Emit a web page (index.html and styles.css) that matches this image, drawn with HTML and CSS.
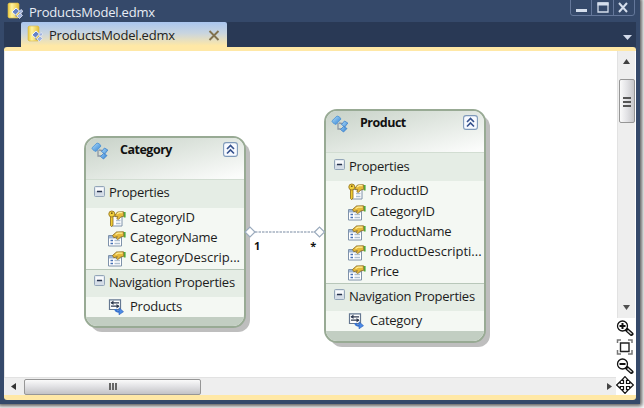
FILE: index.html
```html
<!DOCTYPE html>
<html lang="en">
<head>
<meta charset="utf-8">
<title>ProductsModel.edmx</title>
<link rel="stylesheet" href="styles.css">
</head>
<body>
<svg class="defs" width="0" height="0">
  <defs>
    <linearGradient id="gold" x1="0" x2="1"><stop offset="0" stop-color="#e9c93c"/><stop offset=".35" stop-color="#fff3a0"/><stop offset="1" stop-color="#e2bd38"/></linearGradient>
    <linearGradient id="blue" x1="0" y1="0" x2="1" y2="1"><stop offset="0" stop-color="#b5e2fb"/><stop offset="1" stop-color="#2c7cd2"/></linearGradient>
    <symbol id="file" viewBox="0 0 16 17">
      <path d="M1 2 2 1h9l1 1v13l-1 1H2l-1-1z" fill="url(#gold)" stroke="#d9bb4c" stroke-width=".6"/>
      <path d="M8.500 8v6l3 1M9 8l5 2" fill="none" stroke="#8490ad"/>
      <path d="M5 10 9 6l3.500 3L8.500 13z" fill="#6583c6" stroke="#f0f3fc" stroke-width="1"/>
      <path d="M10 14l3-3 2.500 2.500-3 3zM12 9.500 14 7.500l1.800 1.500L14 11.500z" fill="#9fb3de" stroke="#e4e9f7" stroke-width=".8"/>
    </symbol>
    <symbol id="entity" viewBox="0 0 18 18">
      <path d="M7 8v6h4M8 8l5 1" fill="none" stroke="#8d98a5" stroke-width="1.300"/>
      <path d="M.8 6 6 1q2.500 0 4 3L5 9.500Q2 9 .8 6z" fill="url(#blue)" stroke="#4a92d4" stroke-width=".8"/>
      <path d="m10.500 9.500 3-3.500 3.300 2-3 4zM9.500 14.500l3-3 3.500 2-3.500 3.500z" fill="url(#blue)" stroke="#3b80cc" stroke-width=".8"/>
    </symbol>
    <symbol id="prop" viewBox="0 0 18 16">
      <path d="M.5 4.500h13v10.500H.5z" fill="#fff" stroke="#7f92aa"/>
      <path d="M1 5h12v2.500H1z" fill="#9db5d2"/>
      <path d="M2.500 9.500H5M2.500 12.500H5" stroke="#4771b5" stroke-width="1.500"/>
      <path d="M6.500 9.500h5.500M6.500 12.500h5.500" stroke="#aebfd0" stroke-width="1.300"/>
      <path d="M15.800 1h1.800v5.500h-1.800z" fill="#4fae3b"/>
      <path d="m4.500 4.500 4-3.500 7-.2.300 4.500-3 .7-3 2.500-1.500-1 1-1.800-3.500 1z" fill="#e5b93a" stroke="#8d7028" stroke-width=".9"/>
      <path d="m7.500 3.500 2.500-1.300h4.500" fill="none" stroke="#ffee96" stroke-width="1.300"/>
    </symbol>
    <symbol id="key" viewBox="0 0 18 18">
      <path d="M4.500 6.500H14V16H4.500z" fill="#fff" stroke="#7f92aa"/>
      <path d="M8 10.500h4.500M8 13.500h4.500" stroke="#aebfd0" stroke-width="1.300"/>
      <path d="M15.800 2h1.800v5.500h-1.800z" fill="#4fae3b"/>
      <path d="m7 5 2.500-3 6-.2.300 4.500-3 .7-2.500 2.500-1.500-1 1-1.800H7.500z" fill="#e5b93a" stroke="#8d7028" stroke-width=".9"/>
      <path d="m9 4 2-1.300h3.500" fill="none" stroke="#ffee96" stroke-width="1.300"/>
      <path d="M2.500 6.500H5V15l-1.300 1.800-1.200-1.300z" fill="#f0cc31" stroke="#89681a" stroke-width=".8"/>
      <circle cx="3.800" cy="4" r="3" fill="#f2d13d" stroke="#9a7820" stroke-width=".9"/>
      <circle cx="3.800" cy="3.200" r=".9" fill="#775b1a"/>
    </symbol>
    <symbol id="nav" viewBox="0 0 16 16">
      <path d="M1.500 .8h11v9.700h-11z" fill="#fff" stroke="#657891" stroke-width="1.200"/>
      <path d="M3 3.800h8M3 7.200h8" stroke="#303a50" stroke-width="1.300"/>
      <path d="M5.500 1.500v4.500L2.500 3.800zM8.500 5v4.500l3-2.300z" fill="#303a50"/>
      <path d="M7.500 10q0 2.700 4 2.700" fill="none" stroke="#3874d1" stroke-width="2.200"/>
      <path d="m11 8.800 4.500 3.900-4.500 3.100z" fill="#4b8be7" stroke="#2a5db5" stroke-width=".6"/>
    </symbol>
    <symbol id="collapse" viewBox="0 0 15 15">
      <rect x=".6" y=".6" width="13.800" height="13.800" rx="2.500" fill="#f7faff" stroke="#7f9aba" stroke-width="1.100"/>
      <path d="m4 7 3.500-3.500L11 7M4 11.500 7.500 8l3.500 3.500" fill="none" stroke="#35518d" stroke-width="1.600"/>
    </symbol>
    <symbol id="minus" viewBox="0 0 11 11">
      <rect x=".5" y=".5" width="10" height="10" rx="1" fill="#d5dde7" stroke="#93a5b8"/>
      <path d="M1.500 1.500h8V5h-8z" fill="#f8fafc"/>
      <path d="M3 5.500h5" stroke="#26324b" stroke-width="1.400"/>
    </symbol>
  </defs>
</svg>

<div class="window">
  <header class="titlebar">
    <svg class="file-icon" width="16" height="17"><use href="#file"/></svg>
    <span class="title">ProductsModel.edmx</span>
    <div class="controls">
      <svg width="65" height="16" viewBox="0 0 65 16">
        <path d="M.5 0v13q0 2.500 2.500 2.500h59q2.500 0 2.500-2.500V0M21.500 0v15M43.500 0v15" fill="none" stroke="#64779a"/>
        <path d="M6 9h11v3H6z" fill="#d5deec"/>
        <path d="M28 3h10v9H28z" fill="none" stroke="#d5deec" stroke-width="1.300"/><path d="M27.500 2.500h11v3h-11z" fill="#d5deec"/>
        <path d="m49 3 8 9M57 3l-8 9" stroke="#d5deec" stroke-width="2"/>
      </svg>
    </div>
  </header>
  <div class="tabs">
    <div class="tab">
      <svg class="file-icon" width="16" height="17"><use href="#file"/></svg>
      <span class="title">ProductsModel.edmx</span>
      <svg class="close" width="12" height="11" viewBox="0 0 12 11"><path d="m1.500 1 9 9M10.500 1l-9 9" stroke="#81724f" stroke-width="1.900"/></svg>
    </div>
    <svg class="more" width="9" height="5"><path d="M0 0h9L4.500 5z" fill="#d3dbea"/></svg>
  </div>
  <main class="editor">
    <div class="canvas">
      <section class="entity category">
        <div class="head"><svg width="18" height="18"><use href="#entity"/></svg><h2>Category</h2><svg class="fold" width="15" height="15"><use href="#collapse"/></svg></div>
        <div class="group"><svg width="11" height="11"><use href="#minus"/></svg><span>Properties</span></div>
        <ul>
          <li><svg width="18" height="18"><use href="#key"/></svg><span>CategoryID</span></li>
          <li><svg width="18" height="16"><use href="#prop"/></svg><span>CategoryName</span></li>
          <li><svg width="18" height="16"><use href="#prop"/></svg><span class="cut">CategoryDescrip...</span></li>
        </ul>
        <div class="group second"><svg width="11" height="11"><use href="#minus"/></svg><span>Navigation Properties</span></div>
        <ul class="links"><li><svg width="16" height="16"><use href="#nav"/></svg><span>Products</span></li></ul>
        <div class="foot"></div>
      </section>
      <section class="entity product">
        <div class="head"><svg width="18" height="18"><use href="#entity"/></svg><h2>Product</h2><svg class="fold" width="15" height="15"><use href="#collapse"/></svg></div>
        <div class="group"><svg width="11" height="11"><use href="#minus"/></svg><span>Properties</span></div>
        <ul>
          <li><svg width="18" height="18"><use href="#key"/></svg><span>ProductID</span></li>
          <li><svg width="18" height="16"><use href="#prop"/></svg><span>CategoryID</span></li>
          <li><svg width="18" height="16"><use href="#prop"/></svg><span>ProductName</span></li>
          <li><svg width="18" height="16"><use href="#prop"/></svg><span class="cut">ProductDescripti...</span></li>
          <li><svg width="18" height="16"><use href="#prop"/></svg><span>Price</span></li>
        </ul>
        <div class="group second"><svg width="11" height="11"><use href="#minus"/></svg><span>Navigation Properties</span></div>
        <ul class="links"><li><svg width="16" height="16"><use href="#nav"/></svg><span>Category</span></li></ul>
        <div class="foot"></div>
      </section>
      <div class="relation">
        <svg width="82" height="12" viewBox="0 0 82 12">
          <path d="M11 6h60" stroke="#a5b1c1" stroke-width="1.500" stroke-dasharray="2.500 1"/>
          <path d="m1 6 5-5 5 5-5 5zM70.500 6l5-5 5 5-5 5z" fill="#fff" stroke="#9babbd" stroke-width="1.200"/>
        </svg>
        <div class="ends"><b>1</b><b>*</b></div>
      </div>
    </div>
    <aside class="side">
      <div class="vscroll">
        <svg class="up" width="7" height="5"><path d="M0 5 3.500 0 7 5z" fill="#404040"/></svg>
        <div class="thumb"><i></i><i></i><i></i></div>
        <svg class="down" width="7" height="5"><path d="M0 0h7L3.500 5z" fill="#505050"/></svg>
      </div>
      <div class="tools">
        <svg width="18" height="18" viewBox="0 0 18 18"><path d="m10.500 10.500 5 4.500" stroke="#111" stroke-width="4" stroke-linecap="round"/><path d="m11.500 11.500 4 3.500" stroke="#ddd" stroke-width="1.500"/><circle cx="6.500" cy="7" r="5" fill="#fff" stroke="#111" stroke-width="1.300"/><path d="M3.500 7h6M6.500 4v6" stroke="#111" stroke-width="2"/></svg>
        <svg width="18" height="18" viewBox="0 0 18 18"><path d="M1.500 5V2H5M12 2h4v3M16 12v4h-4M5 16H1.500v-4" fill="none" stroke="#777" stroke-width="1.500"/><path d="M4.500 5h8.500v8.500H4.500z" fill="#fff" stroke="#222" stroke-width="1.400"/></svg>
        <svg width="18" height="18" viewBox="0 0 18 18"><path d="m10.500 10.500 5 4.500" stroke="#111" stroke-width="4" stroke-linecap="round"/><path d="m11.500 11.500 4 3.500" stroke="#ddd" stroke-width="1.500"/><circle cx="6.500" cy="7" r="5" fill="#fff" stroke="#111" stroke-width="1.300"/><path d="M3.500 7h6" stroke="#111" stroke-width="2"/></svg>
        <svg width="18" height="18" viewBox="0 0 18 18"><path d="m9 .6 3.500 3.700h-2v3.200h3.200v-2L17.400 9l-3.700 3.500v-2h-3.200v3.200h2L9 17.400l-3.500-3.700h2v-3.200H4.300v2L.6 9l3.700-3.500v2h3.200V4.300h-2z" fill="#fff" stroke="#111" stroke-width="1.200"/></svg>
      </div>
    </aside>
    <div class="hscroll">
      <svg width="5" height="7"><path d="M5 0v7L0 3.500z" fill="#333"/></svg>
      <div class="thumb"><i></i><i></i><i></i></div>
      <svg class="right" width="5" height="7"><path d="M0 0v7l5-3.500z" fill="#444"/></svg>
    </div>
  </main>
</div>
</body>
</html>
```
FILE: styles.css
```css
* { box-sizing: border-box; }
html, body { margin: 0; width: 644px; height: 408px; overflow: hidden; background: #fff; }
body { font: 13px/16px "Open Sans", "Noto Sans", sans-serif; letter-spacing: -.25px; color: #1c1c1c; }
svg { display: block; flex: none; }
.defs { position: absolute; }
.window { width: 640px; height: 404px; padding: 0 4px; background: #35496a; box-shadow: 0 0 4px 2px #555; }
.titlebar { height: 22px; display: flex; padding-left: 3px; }
.titlebar .file-icon { margin-top: 2px; }
.title { white-space: nowrap; letter-spacing: -.2px; }
.titlebar .title { margin: 4px 0 0 6px; color: #e8edf5; }
.controls { margin: 0 1px 0 auto; }
.tabs { height: 25px; width: 632px; background: #293955; display: flex; padding-left: 17px; }
.tab { width: 206px; height: 25px; display: flex; padding-left: 6px; border-radius: 2px 2px 0 0; background: linear-gradient(#aac6ef, #c9d5df 45%, #ffe8a6 95%); }
.tab .file-icon { margin-top: 3px; }
.tab .title { margin: 5px 0 0 6px; color: #222; }
.close { margin: 8px 7px 0 auto; }
.more { margin: 13px 4px 0 auto; }
.editor { width: 632px; height: 353px; border: solid #ffe8a6; border-width: 4px 0 5px; border-radius: 3px; background: #fff; display: grid; grid-template: 326px 18px / 612px 20px; }
.canvas { position: relative; border-left: 1px solid #e6e6e6; }
.entity { position: absolute; width: 162px; border: 2px solid #98aa94; border-radius: 13px; background: #f4f8f3; box-shadow: 5px 5px 0 -1px #bebebe; overflow: hidden; }
.category { left: 79px; top: 85px; height: 192px; }
.product { left: 319px; top: 58px; height: 234px; }
.head { height: 41px; padding: 4px 6px 0 5px; display: flex; background: linear-gradient(165deg, #c8d2c8, #dce3dc 40%, #fbfcfb 95%); }
.head h2 { margin: 0 0 0 11px; font-size: 12.5px; line-height: 16px; font-weight: 700; letter-spacing: -.5px; color: #111; }
.fold { margin-left: auto; }
.group { height: 29px; background: #e5ede5; border-top: 1px solid #d2ddd2; display: flex; padding: 6px 0 0 8px; white-space: nowrap; }
.group span { margin: -1px 0 0 4px; }
.category .group:not(.second) span { margin-top: -2px; }
ul { list-style: none; margin: 0; padding: 0 0 0 22px; height: 61px; display: grid; }
.product ul { height: 102px; }
li { display: flex; align-items: center; white-space: nowrap; }
li span { margin: -4px 0 0 4px; }
.links li span { margin: -2px 0 0 6px; }
.cut { letter-spacing: 0; }
.group.second { height: 28px; padding-top: 5px; border-color: #b8c7b9; }
.group.second span { margin-top: -1px; }
.entity .links { height: 20px; }
.foot { height: 12px; background: #c2cec2; }
.relation { position: absolute; left: 239px; top: 175px; width: 82px; }
.ends { display: flex; justify-content: space-between; padding: 0 10px; color: #111; font-size: 11px; }
.side { display: grid; grid-template-rows: 267px 77px; grid-row: span 2; grid-column: 2; }
.vscroll { width: 18px; margin-left: 1px; background: #eeeeee; border-left: 1px solid #e2e2e2; display: flex; flex-direction: column; align-items: center; padding: 8px 0; }
.vscroll .thumb { margin-top: 15px; width: 16px; height: 44px; border: 1px solid #969696; border-radius: 2px; background: linear-gradient(90deg, #fafafa, #e2e2e5 50%, #c7c7ca); display: flex; flex-direction: column; align-items: center; justify-content: center; gap: 1px; }
.vscroll i { width: 8px; height: 3px; border: solid #555; border-width: 0 0 2px; }
.down { margin-top: auto; }
.tools { display: grid; grid-template-rows: repeat(4, 19px); padding-top: 1px; }
.hscroll { grid-row: 2; grid-column: 1; background: #eeeeee; border-top: 1px solid #e2e2e2; display: flex; align-items: center; padding: 0 4px 0 7px; }
.hscroll .thumb { width: 177px; height: 16px; margin-left: 8px; border: 1px solid #969696; border-radius: 2px; background: linear-gradient(#fafafa, #e2e2e5 45%, #c3c3c6); display: flex; align-items: center; justify-content: center; gap: 1px; }
.hscroll i { width: 2px; height: 7px; background: #666; }
.right { margin-left: auto; }
```
